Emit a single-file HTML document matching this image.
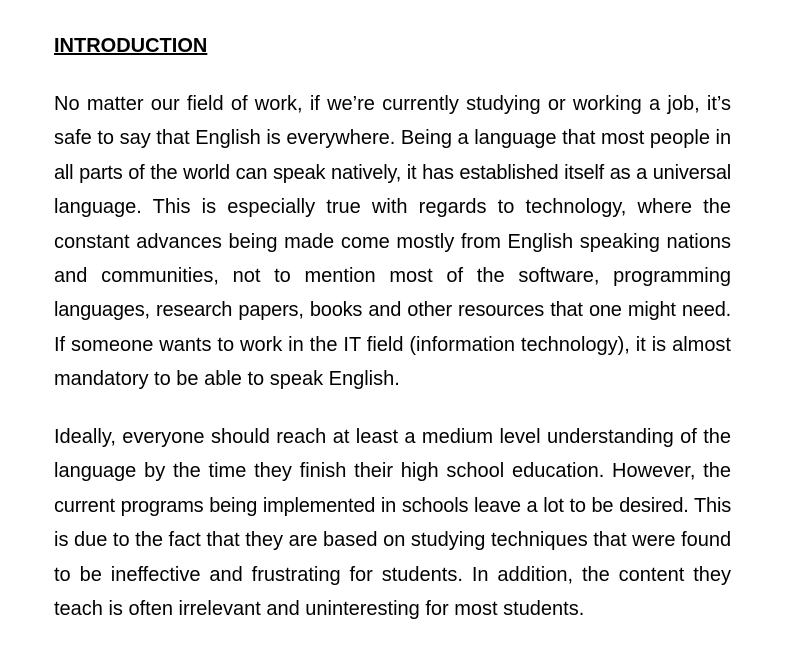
<!DOCTYPE html>
<html><head><meta charset="utf-8"><style>
body{margin:0;background:#fff;width:785px;height:649px;overflow:hidden;font-family:"Liberation Sans",Arial,sans-serif;color:#000;font-size:20px;}
.w{position:absolute;left:54px;width:677px;}
h1{position:absolute;left:54px;top:29px;margin:0;font-size:20px;line-height:34px;font-weight:bold;text-decoration:underline;}
.l{height:34.4px;line-height:34.4px;text-align:justify;text-align-last:justify;white-space:nowrap;}
.l.e{text-align-last:left;}
.t{letter-spacing:-0.2px;word-spacing:-0.5px;}
</style></head><body>
<h1>INTRODUCTION</h1>
<div class="w" style="top:87px">
<div class="l">No matter our field of work, if we’re currently studying or working a job, it’s</div>
<div class="l">safe to say that English is everywhere. Being a language that most people in</div>
<div class="l t">all parts of the world can speak natively, it has established itself as a universal</div>
<div class="l">language. This is especially true with regards to technology, where the</div>
<div class="l">constant advances being made come mostly from English speaking nations</div>
<div class="l">and communities, not to mention most of the software, programming</div>
<div class="l t">languages, research papers, books and other resources that one might need.</div>
<div class="l">If someone wants to work in the IT field (information technology), it is almost</div>
<div class="l e">mandatory to be able to speak English.</div>
</div>
<div class="w" style="top:420px">
<div class="l">Ideally, everyone should reach at least a medium level understanding of the</div>
<div class="l">language by the time they finish their high school education. However, the</div>
<div class="l t">current programs being implemented in schools leave a lot to be desired. This</div>
<div class="l">is due to the fact that they are based on studying techniques that were found</div>
<div class="l">to be ineffective and frustrating for students. In addition, the content they</div>
<div class="l e">teach is often irrelevant and uninteresting for most students.</div>
</div>
</body></html>
